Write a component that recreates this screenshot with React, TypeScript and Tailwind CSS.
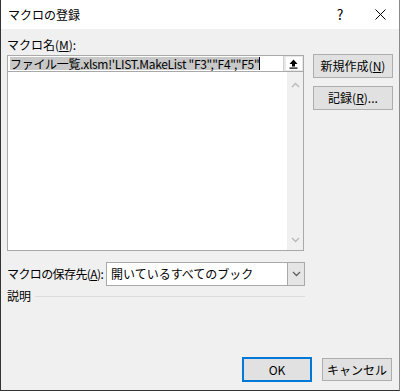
import React from 'react';

const jp = { fontFamily: '"Noto Sans CJK JP", "Liberation Sans", sans-serif' };

const Btn: React.FC<{ children: React.ReactNode; focused?: boolean; className?: string }> = ({ children, focused, className = '' }) => (
  <div
    className={`flex items-center justify-center bg-[#e1e1e1] text-[12px] text-black whitespace-nowrap ${
      focused ? 'border-2 border-[#0078d7]' : 'border border-[#adadad]'
    } ${className}`}
  >
    {children}
  </div>
);

const Chevron: React.FC<{ up?: boolean }> = ({ up }) => (
  <svg width="9" height="6" viewBox="0 0 9 6" className={up ? 'rotate-180' : ''}>
    <path d="M1 1 L4.5 4.5 L8 1" fill="none" stroke="#b8b8b8" strokeWidth="1.3" />
  </svg>
);

export default function App() {
  return (
    <div style={jp} className="w-[400px] h-[391px] flex flex-col bg-[#f0f0f0] border-l border-b border-r border-l-[#333] border-b-[#333] border-r-[#8a8a8a] overflow-hidden select-none">
      {/* タイトルバー */}
      <div className="h-[29px] shrink-0 bg-white flex items-center pl-[7px] text-[12px] text-black">
        <span className="flex-1">マクロの登録</span>
        <span className="w-[40px] text-center text-[14px] mr-[1px]">?</span>
        <span className="w-[38px] flex justify-center">
          <svg width="11" height="11" viewBox="0 0 11 11">
            <path d="M0.5 0.5 L10.5 10.5 M10.5 0.5 L0.5 10.5" stroke="#000" strokeWidth="1" />
          </svg>
        </span>
      </div>

      <div className="flex-1 flex flex-col pl-[6px] pr-[6px] pt-[7px] text-[12px] text-black">
        <div className="leading-[17px] h-[19px]">
          マクロ名(<span className="underline">M</span>):
        </div>

        <div className="flex gap-[9px]">
          <div className="w-[298px] flex flex-col">
            {/* 入力欄 */}
            <div className="h-[17px] border border-[#a9a9a9] bg-white flex items-stretch">
              <div className="flex-1 flex items-center pl-[2px] overflow-hidden whitespace-nowrap">
                <span className="bg-[#c8c8c8] leading-[13px] h-[13px] text-[12px] tracking-[-0.3px]">
                  ファイル一覧.xlsm!'LIST.MakeList "F3","F4","F5"
                </span>
                <span className="w-px h-[13px] bg-black" />
              </div>
              <div className="w-[20px] bg-[#e8e8e8] border-l border-[#d0d0d0] flex items-center justify-center">
                <div className="w-[16px] h-[13px] bg-white flex items-center justify-center">
                  <svg width="9" height="10" viewBox="0 0 9 10">
                    <path d="M4.5 0.5 L8.5 5 L6 5 L6 7.5 L3 7.5 L3 5 L0.5 5 Z" fill="#000" />
                    <rect x="0.5" y="8.5" width="8" height="1.2" fill="#000" />
                  </svg>
                </div>
              </div>
            </div>
            {/* リスト */}
            <div className="h-[179px] border border-t-0 border-[#a9a9a9] bg-white flex">
              <div className="flex-1" />
              <div className="w-[16px] bg-[#f0f0f0] flex flex-col items-center justify-between pt-[10px] pb-[7px]">
                <Chevron up />
                <Chevron />
              </div>
            </div>
          </div>

          <div className="flex flex-col gap-[8px] -mt-[1px]">
            <Btn className="w-[80px] h-[24px]">
              新規作成(<span className="underline">N</span>)
            </Btn>
            <Btn className="w-[80px] h-[24px]">
              記録(<span className="underline">R</span>)...
            </Btn>
          </div>
        </div>

        {/* 保存先 */}
        <div className="flex items-center mt-[11px] w-[298px]">
          <span className="w-[99px] shrink-0 whitespace-nowrap tracking-[-0.6px]">
            マクロの保存先(<span className="underline">A</span>):
          </span>
          <div className="flex-1 h-[24px] border border-[#a9a9a9] bg-white flex">
            <span className="flex-1 pl-[4px] leading-[22px] whitespace-nowrap">開いているすべてのブック</span>
            <div className="w-[17px] bg-[#e5e5e5] border-l border-[#a9a9a9] flex items-center justify-center">
              <svg width="9" height="6" viewBox="0 0 9 6">
                <path d="M1 1 L4.5 4.5 L8 1" fill="none" stroke="#606060" strokeWidth="1.3" />
              </svg>
            </div>
          </div>
        </div>

        {/* 説明 */}
        <div className="flex items-center w-[298px] h-[20px]">
          <span className="mr-[4px]">説明</span>
          <div className="flex-1 h-px bg-[#dcdcdc]" />
        </div>

        <div className="flex-1" />

        {/* 下部ボタン */}
        <div className="flex justify-end gap-[10px] pr-[1px] mb-[8px]">
          <Btn focused className="w-[70px] h-[25px]">OK</Btn>
          <Btn className="w-[70px] h-[23px] mt-[1px]">キャンセル</Btn>
        </div>
      </div>
    </div>
  );
}
